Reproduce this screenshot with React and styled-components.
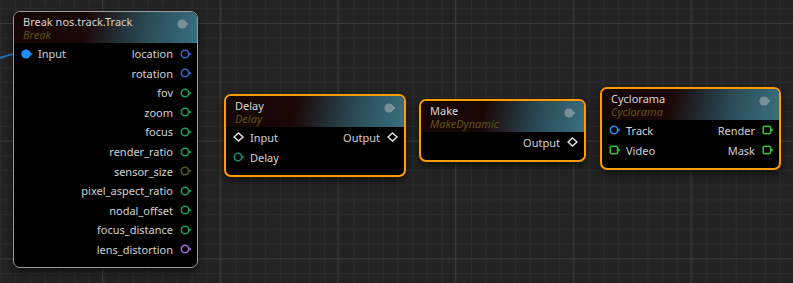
import React from "react";
import styled, { createGlobalStyle } from "styled-components";

const GlobalStyle = createGlobalStyle`
    html, body {
        margin: 0;
        padding: 0;
        background: #232323;
    }
    body {
        font-family: "Noto Sans", "Open Sans", sans-serif;
    }
`;

const Canvas = styled.div`
    position: relative;
    width: 793px;
    height: 283px;
    overflow: hidden;
    background-color: #232323;
    background-image:
        linear-gradient(to right, #3b3b3b 1px, transparent 1px),
        linear-gradient(to bottom, #3b3b3b 1px, transparent 1px),
        linear-gradient(to right, #2c2c2c 1px, transparent 1px),
        linear-gradient(to bottom, #2c2c2c 1px, transparent 1px);
    background-size: 117.7px 117.7px, 117.7px 117.7px, 14.71px 14.71px, 14.71px 14.71px;
    background-position: 102px 23px, 102px 23px, 0.5px 8.3px, 0.5px 8.3px;
`;

const Edge = styled.svg`
    position: absolute;
    left: 0;
    top: 48px;
`;

const NodeBox = styled.div`
    position: absolute;
    left: ${(p) => p.$x}px;
    top: ${(p) => p.$y}px;
    width: ${(p) => p.$w}px;
    box-sizing: border-box;
    display: flex;
    flex-direction: column;
    background: #000;
    border: ${(p) => (p.$selected ? "2px solid #ff9a00" : "1px solid #9a9a9a")};
    border-radius: 7px;
    overflow: hidden;
    box-shadow: 0 4px 10px rgba(0, 0, 0, 0.55);
`;

const Header = styled.div`
    height: 31px;
    box-sizing: border-box;
    padding: 3px 8px 2px 9px;
    display: flex;
    justify-content: space-between;
    align-items: flex-start;
    background: linear-gradient(100deg, #160505 0%, #1a0606 38%, #2a4b56 72%, #3a6f80 100%);
`;

const HeaderText = styled.div`
    display: flex;
    flex-direction: column;
`;

const Title = styled.span`
    font-size: 11px;
    line-height: 13px;
    color: #d6d6d6;
`;

const Subtitle = styled.span`
    font-size: 11px;
    line-height: 13px;
    font-style: italic;
    color: #5e5514;
`;

const HeaderDot = styled.svg`
    margin-top: 4px;
`;

const Body = styled.div`
    display: grid;
    grid-template-columns: 1fr auto;
    padding: ${(p) => (p.$selected ? 0 : 1)}px 5px 8px 7px;
`;

const Column = styled.div`
    display: flex;
    flex-direction: column;
    align-items: ${(p) => (p.$right ? "flex-end" : "flex-start")};
`;

const Row = styled.div`
    height: ${(p) => p.$h}px;
    display: flex;
    align-items: center;
    gap: ${(p) => (p.$right ? 7 : 5)}px;
    font-size: 11px;
    color: #d2d2d2;
    white-space: nowrap;
`;

const Pin = ({ kind, color }) => {
    const arrow = <polygon points="9.2,3.2 11.6,5 9.2,6.8" fill={color} />;
    if (kind === "diamond") {
        return (
            <svg width="12" height="10" viewBox="0 0 12 10">
                <polygon points="5.5,1 10,5 5.5,9 1,5" fill="none" stroke="#e6e6e6" strokeWidth="1.4" />
            </svg>
        );
    }
    if (kind === "square") {
        return (
            <svg width="12" height="10" viewBox="0 0 12 10">
                <rect x="1.2" y="1.2" width="7.4" height="7.6" rx="1.6" fill="none" stroke={color} strokeWidth="1.6" />
                {arrow}
            </svg>
        );
    }
    if (kind === "filled") {
        return (
            <svg width="12" height="10" viewBox="0 0 12 10">
                <circle cx="5" cy="5" r="4.6" fill={color} />
                {arrow}
            </svg>
        );
    }
    return (
        <svg width="12" height="10" viewBox="0 0 12 10">
            <circle cx="5" cy="5" r="3.7" fill="none" stroke={color} strokeWidth="1.6" />
            {arrow}
        </svg>
    );
};

const BLUE = "#3b63c8";
const GREEN = "#1c9a5a";

const nodes = [
    {
        title: "Break nos.track.Track",
        subtitle: "Break",
        x: 13, y: 11, w: 185, rowH: 19.55,
        inputs: [{ name: "Input", kind: "filled", color: "#1e8fff" }],
        outputs: [
            { name: "location", color: BLUE },
            { name: "rotation", color: BLUE },
            { name: "fov", color: GREEN },
            { name: "zoom", color: GREEN },
            { name: "focus", color: GREEN },
            { name: "render_ratio", color: GREEN },
            { name: "sensor_size", color: "#4d5a1c" },
            { name: "pixel_aspect_ratio", color: GREEN },
            { name: "nodal_offset", color: GREEN },
            { name: "focus_distance", color: GREEN },
            { name: "lens_distortion", color: "#9a6ae0" },
        ],
    },
    {
        title: "Delay",
        subtitle: "Delay",
        x: 224, y: 94, w: 182, rowH: 20, selected: true,
        inputs: [
            { name: "Input", kind: "diamond" },
            { name: "Delay", color: "#158a6a" },
        ],
        outputs: [{ name: "Output", kind: "diamond" }],
    },
    {
        title: "Make",
        subtitle: "MakeDynamic",
        x: 419, y: 99, w: 167, rowH: 20, selected: true,
        inputs: [],
        outputs: [{ name: "Output", kind: "diamond" }],
    },
    {
        title: "Cyclorama",
        subtitle: "Cyclorama",
        x: 600, y: 87, w: 181, rowH: 20, selected: true,
        inputs: [
            { name: "Track", color: "#2a8ae6" },
            { name: "Video", kind: "square", color: "#28c23c" },
        ],
        outputs: [
            { name: "Render", kind: "square", color: "#28c23c" },
            { name: "Mask", kind: "square", color: "#28c23c" },
        ],
    },
];

const Node = ({ node }) => (
    <NodeBox $x={node.x} $y={node.y} $w={node.w} $selected={node.selected}>
        <Header>
            <HeaderText>
                <Title>{node.title}</Title>
                <Subtitle>{node.subtitle}</Subtitle>
            </HeaderText>
            <HeaderDot width="12" height="10" viewBox="0 0 12 10">
                <circle cx="5" cy="5" r="4.6" fill="rgba(205,205,205,0.45)" />
                <polygon points="9.2,3.2 11.6,5 9.2,6.8" fill="rgba(205,205,205,0.45)" />
            </HeaderDot>
        </Header>
        <Body $selected={node.selected}>
            <Column>
                {node.inputs.map((pin) => (
                    <Row key={pin.name} $h={node.rowH}>
                        <Pin kind={pin.kind} color={pin.color} />
                        {pin.name}
                    </Row>
                ))}
            </Column>
            <Column $right>
                {node.outputs.map((pin) => (
                    <Row key={pin.name} $h={node.rowH} $right>
                        {pin.name}
                        <Pin kind={pin.kind} color={pin.color} />
                    </Row>
                ))}
            </Column>
        </Body>
    </NodeBox>
);

const App = () => (
    <>
        <GlobalStyle />
        <Canvas>
            <Edge width="20" height="16" viewBox="0 0 20 16">
                <path d="M0 10 C6 8 10 6 20 5" fill="none" stroke="#2778c8" strokeWidth="2" />
            </Edge>
            {nodes.map((node) => (
                <Node key={node.title} node={node} />
            ))}
        </Canvas>
    </>
);

export default App;
